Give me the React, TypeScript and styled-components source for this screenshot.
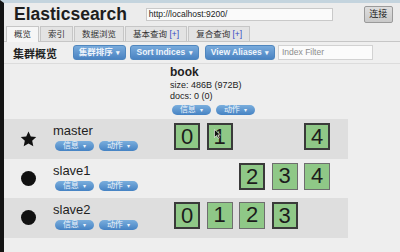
import React from 'react';
import styled, { createGlobalStyle } from 'styled-components';

interface ShardInfo {
  slot: number;
  primary: boolean;
}

interface NodeInfo {
  name: string;
  master: boolean;
  shards: ShardInfo[];
}

const NODES: NodeInfo[] = [
  {
    name: 'master',
    master: true,
    shards: [
      { slot: 0, primary: true },
      { slot: 1, primary: true },
      { slot: 4, primary: true },
    ],
  },
  {
    name: 'slave1',
    master: false,
    shards: [
      { slot: 2, primary: true },
      { slot: 3, primary: false },
      { slot: 4, primary: false },
    ],
  },
  {
    name: 'slave2',
    master: false,
    shards: [
      { slot: 0, primary: true },
      { slot: 1, primary: false },
      { slot: 2, primary: false },
      { slot: 3, primary: true },
    ],
  },
];

const TABS = [
  { label: '概览', active: true },
  { label: '索引' },
  { label: '数据浏览' },
  { label: '基本查询', plus: true },
  { label: '复合查询', plus: true },
];

const TOOL_BUTTONS = [
  { label: '集群排序', width: 53, gap: 4 },
  { label: 'Sort Indices', width: 69, gap: 6 },
  { label: 'View Aliases', width: 70, gap: 3 },
];

const GlobalStyle = createGlobalStyle`
  html, body {
    margin: 0;
    padding: 0;
    background: #eeeeee;
    font-family: "Liberation Sans", "Noto Sans CJK SC", sans-serif;
    color: #222;
  }
`;

const Star = () => (
  <svg width="17" height="16" viewBox="0 0 24 23">
    <path d="M12 0.8l3.3 7.1 7.8 0.9-5.8 5.3 1.6 7.7L12 17.9l-6.9 3.9 1.6-7.7L0.9 8.8l7.8-0.9z" fill="#111" />
  </svg>
);

const Cursor = () => (
  <svg width="7" height="10" viewBox="0 0 7 10">
    <path d="M0.5 0.5v8l2-2 1.5 3 1.3-0.6-1.5-3h2.7z" fill="#111" stroke="#fff" strokeWidth="0.6" />
  </svg>
);

const Pills = () => (
  <PillRow>
    <Pill>信息 <PillCaret>▾</PillCaret></Pill>
    <Pill>动作 <PillCaret>▾</PillCaret></Pill>
  </PillRow>
);

const App = () => {
  return (
    <>
      <GlobalStyle />
      <Frame>
        <Header>
          <Title>Elasticsearch</Title>
          <UrlInput>http://localhost:9200/</UrlInput>
          <ConnectButton>连接</ConnectButton>
        </Header>
        <TabBar>
          {TABS.map((t) => (
            <Tab key={t.label} active={!!t.active}>
              {t.label}
              {t.plus && <Plus> [+]</Plus>}
            </Tab>
          ))}
        </TabBar>
        <Toolbar>
          <Heading>集群概览</Heading>
          {TOOL_BUTTONS.map((b) => (
            <DropButton key={b.label} width={b.width} gap={b.gap}>
              {b.label} <Caret>▾</Caret>
            </DropButton>
          ))}
          <FilterInput>Index Filter</FilterInput>
        </Toolbar>
        <ClusterTable>
          <HeadCell />
          <IndexHead>
            <IndexName>book</IndexName>
            <IndexStat>size: 486B (972B)</IndexStat>
            <IndexStat>docs: 0 (0)</IndexStat>
            <Pills />
          </IndexHead>
          {NODES.map((node, i) => (
            <React.Fragment key={node.name}>
              <NodeCell striped={i % 2 === 0}>
                <NodeIcon>{node.master ? <Star /> : <Dot />}</NodeIcon>
                <NodeText>
                  <NodeName>{node.name}</NodeName>
                  <Pills />
                </NodeText>
              </NodeCell>
              <ShardCell striped={i % 2 === 0}>
                {[0, 1, 2, 3, 4].map((slot) => {
                  const shard = node.shards.find((s) => s.slot === slot);
                  if (!shard) return <Slot key={slot} />;
                  return (
                    <Shard key={slot} primary={shard.primary}>
                      {slot}
                      {node.master && slot === 1 && (
                        <CursorMark>
                          <Cursor />
                        </CursorMark>
                      )}
                    </Shard>
                  );
                })}
              </ShardCell>
            </React.Fragment>
          ))}
        </ClusterTable>
      </Frame>
    </>
  );
};

const Frame = styled.div`
  min-height: 252px;
  box-sizing: border-box;
  border-left: 4px solid #141414;
  border-top: 3px solid #c4d4de;
  background: #eeeeee;
`;

const Header = styled.div`
  display: flex;
  align-items: center;
  height: 22px;
  padding-left: 10px;
  background: #ececec;
`;

const Title = styled.h1`
  margin: 0;
  font-size: 17.5px;
  font-weight: 700;
  line-height: 22px;
  color: #1e1e1e;
`;

const UrlInput = styled.div`
  margin-left: 19px;
  width: 187px;
  height: 13px;
  box-sizing: border-box;
  border: 1px solid #c9c9c9;
  background: #fafafa;
  font-size: 8.5px;
  line-height: 11px;
  padding-left: 2px;
  color: #222;
`;

const ConnectButton = styled.div`
  margin-left: 31px;
  width: 29px;
  height: 17px;
  box-sizing: border-box;
  border: 1px solid #9a9a9a;
  border-radius: 2px;
  background: linear-gradient(#dedede, #c9c9c9);
  font-size: 9px;
  line-height: 15px;
  text-align: center;
  color: #222;
`;

const TabBar = styled.div`
  display: flex;
  align-items: flex-end;
  height: 16px;
  padding-left: 2px;
  gap: 1px;
  border-bottom: 1px solid #c6c6c6;
  background: #ececec;
`;

const Tab = styled.div<{ active: boolean }>`
  box-sizing: border-box;
  padding: 0 7px;
  border: 1px solid #c6c6c6;
  border-bottom: none;
  background: ${(p) => (p.active ? '#f6f6f6' : '#e3e3e3')};
  font-size: 8.5px;
  line-height: 14px;
  color: #333;
  white-space: nowrap;
  margin-bottom: ${(p) => (p.active ? '-1px' : '0')};
  height: ${(p) => (p.active ? '16px' : '15px')};
`;

const Plus = styled.span`
  color: #3447c4;
`;

const Toolbar = styled.div`
  display: flex;
  align-items: center;
  height: 21px;
  padding-left: 9px;
  border-bottom: 1px solid #dcdcdc;
  background: #efefef;
`;

const Heading = styled.div`
  width: 60px;
  font-size: 11px;
  font-weight: 700;
  color: #222;
`;

const DropButton = styled.div<{ width: number; gap: number }>`
  width: ${(p) => p.width}px;
  margin-right: ${(p) => p.gap}px;
  height: 15px;
  box-sizing: border-box;
  border-radius: 3px;
  border: 1px solid #4f86be;
  background: linear-gradient(#79abdc, #4a83c2);
  color: #eef4fb;
  font-size: 8.5px;
  font-weight: 700;
  line-height: 13px;
  text-align: center;
  white-space: nowrap;
  overflow: hidden;
`;

const Caret = styled.span`
  font-size: 7px;
  margin-left: 1px;
`;

const FilterInput = styled.div`
  width: 95px;
  height: 15px;
  box-sizing: border-box;
  border: 1px solid #d2d2d2;
  background: #fbfbfb;
  color: #8d8d8d;
  font-size: 8.5px;
  line-height: 13px;
  padding-left: 3px;
`;

const ClusterTable = styled.div`
  display: grid;
  grid-template-columns: 166px 178px;
  grid-auto-rows: 39.5px;
  grid-template-rows: 55px;
`;

const HeadCell = styled.div``;

const IndexHead = styled.div`
  padding-top: 1px;
`;

const IndexName = styled.div`
  font-size: 12px;
  font-weight: 700;
  line-height: 15px;
  color: #1e1e1e;
`;

const IndexStat = styled.div`
  font-size: 9px;
  line-height: 11px;
  color: #222;
`;

const PillRow = styled.div`
  display: flex;
  gap: 5px;
  margin-left: 2px;
  margin-top: 3px;
`;

const Pill = styled.div`
  width: 39px;
  height: 10px;
  box-sizing: border-box;
  border-radius: 5px;
  background: linear-gradient(#7aaedd, #4582c3);
  color: #eef4fb;
  font-size: 8px;
  line-height: 10px;
  text-align: center;
  white-space: nowrap;
`;

const PillCaret = styled.span`
  font-size: 6px;
  margin-left: 2px;
`;

const NodeCell = styled.div<{ striped: boolean }>`
  display: flex;
  background: ${(p) => (p.striped ? '#dedede' : 'transparent')};
`;

const NodeIcon = styled.div`
  width: 49px;
  display: flex;
  align-items: center;
  justify-content: center;
`;

const Dot = styled.div`
  width: 15px;
  height: 15px;
  border-radius: 50%;
  background: #111;
`;

const NodeText = styled.div`
  padding-top: 5px;
`;

const NodeName = styled.div`
  font-size: 13px;
  line-height: 14px;
  color: #1e1e1e;
`;

const ShardCell = styled.div<{ striped: boolean }>`
  display: flex;
  gap: 6.5px;
  padding: 4px 0 0 4px;
  background: ${(p) => (p.striped ? '#dedede' : 'transparent')};
`;

const Slot = styled.div`
  width: 26px;
  height: 27px;
`;

const Shard = styled.div<{ primary: boolean }>`
  position: relative;
  width: 26px;
  height: 27px;
  box-sizing: border-box;
  border: ${(p) => (p.primary ? '2.5px solid #3a3a3a' : '1.5px solid #6e6e6e')};
  background: #8fc887;
  font-size: 22px;
  line-height: 23px;
  text-align: center;
  color: #1c1c1c;
`;

const CursorMark = styled.div`
  position: absolute;
  left: 5px;
  top: 4px;
  line-height: 0;
`;

export default App;
